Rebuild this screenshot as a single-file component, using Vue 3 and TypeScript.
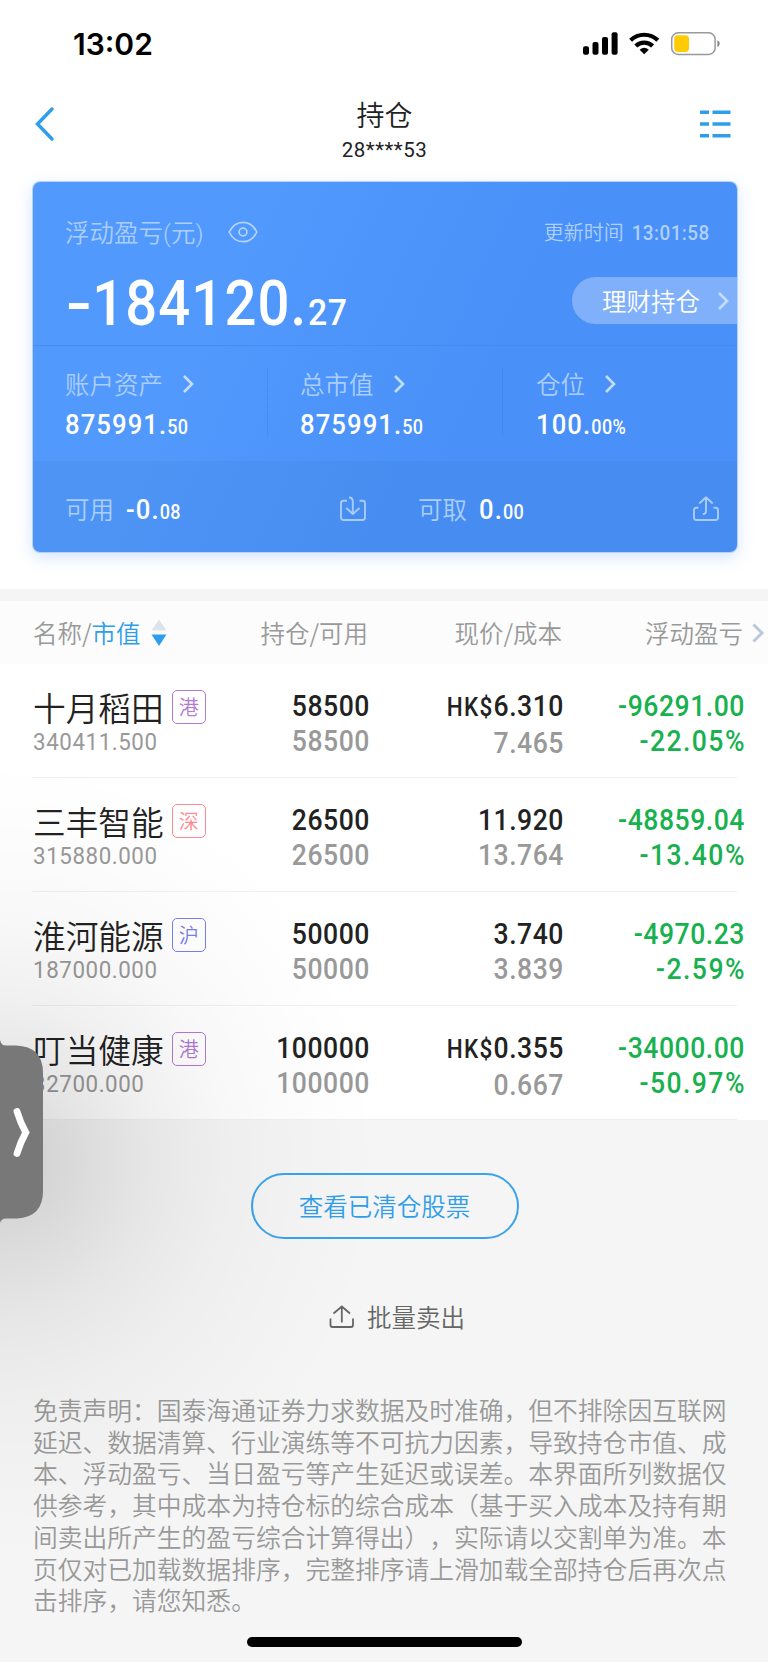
<script setup lang="ts">
interface Summary {
  label: string
  whole: string
  fraction: string
}

interface Holding {
  name: string
  market: string
  tone: 'hk' | 'sz' | 'sh'
  value: string
  shares: string
  available: string
  currency?: string
  price: string
  cost: string
  profit: string
  rate: string
}

const summaries: Summary[] = [
  { label: '账户资产', whole: '875991.', fraction: '50' },
  { label: '总市值', whole: '875991.', fraction: '50' },
  { label: '仓位', whole: '100.', fraction: '00%' },
]

const holdings: Holding[] = [
  { name: '十月稻田', market: '港', tone: 'hk', value: '340411.500', shares: '58500', available: '58500', currency: 'HK$', price: '6.310', cost: '7.465', profit: '-96291.00', rate: '-22.05%' },
  { name: '三丰智能', market: '深', tone: 'sz', value: '315880.000', shares: '26500', available: '26500', price: '11.920', cost: '13.764', profit: '-48859.04', rate: '-13.40%' },
  { name: '淮河能源', market: '沪', tone: 'sh', value: '187000.000', shares: '50000', available: '50000', price: '3.740', cost: '3.839', profit: '-4970.23', rate: '-2.59%' },
  { name: '叮当健康', market: '港', tone: 'hk', value: '32700.000', shares: '100000', available: '100000', currency: 'HK$', price: '0.355', cost: '0.667', profit: '-34000.00', rate: '-50.97%' },
]

const disclaimer: string[] = [
  '免责声明：国泰海通证券力求数据及时准确，但不排除因互联网',
  '延迟、数据清算、行业演练等不可抗力因素，导致持仓市值、成',
  '本、浮动盈亏、当日盈亏等产生延迟或误差。本界面所列数据仅',
  '供参考，其中成本为持仓标的综合成本（基于买入成本及持有期',
  '间卖出所产生的盈亏综合计算得出），实际请以交割单为准。本',
  '页仅对已加载数据排序，完整排序请上滑加载全部持仓后再次点',
  '击排序，请您知悉。',
]
</script>

<template>
  <div class="page">
    <div class="status">
      <span class="clock">13:02</span>
      <svg class="status-icons" width="140" height="26" viewBox="0 0 140 26">
        <rect x="2" y="16.3" width="6" height="8.4" rx="2" />
        <rect x="11.5" y="12" width="6" height="12.7" rx="2" />
        <rect x="21" y="7" width="6" height="17.7" rx="2" />
        <rect x="30.6" y="2.3" width="6" height="22.4" rx="2" />
        <g fill="none" stroke="#000" stroke-width="4.2">
          <path d="M49.6 10.3a19.5 19.5 0 0 1 27.2 0" />
          <path d="M54.8 16a12 12 0 0 1 16.8 0" />
        </g>
        <path d="M63.2 24.3l-4.6-4.6q4.6-4 9.2 0z" />
        <rect x="90.7" y="2.8" width="43.4" height="21.6" rx="6.5" fill="#fff" stroke="#999" stroke-width="1.5" />
        <rect x="93.2" y="5.3" width="14.8" height="16.6" rx="3.6" fill="#ffcb05" />
        <path d="M136.3 10.2q2.5 1 2.5 3.4t-2.5 3.4z" fill="#8b8b8b" />
      </svg>
    </div>

    <header class="nav">
      <svg class="back" width="22" height="36" viewBox="0 0 22 36">
        <path d="M19 3L4.5 18L19 33" fill="none" stroke="#2f9eea" stroke-width="3.4" stroke-linecap="round" />
      </svg>
      <div class="titles">
        <h1>持仓</h1>
        <p>28****53</p>
      </div>
      <svg class="menu" width="32" height="30" viewBox="0 0 32 30">
        <path d="M1 3.2h9M13.5 3.2h18M1 15h9M13.5 15h18M1 26.7h9M13.5 26.7h18" stroke="#2f9eea" stroke-width="3.6" />
      </svg>
    </header>

    <section class="card">
      <div class="card-top">
        <div class="card-head">
          <span class="soft label">浮动盈亏<span class="paren">(</span>元<span class="paren">)</span></span>
          <svg class="eye" width="30" height="22" viewBox="0 0 30 22">
            <g fill="none" stroke="#b4d3fe" stroke-width="1.7">
              <path d="M1.2 11C4.5 4.2 9.5 1.3 15 1.3S25.5 4.2 28.8 11C25.5 17.8 20.5 20.7 15 20.7S4.5 17.8 1.2 11z" />
              <circle cx="15" cy="11" r="3.9" />
            </g>
          </svg>
          <span class="updated">更新时间 <span class="num">13:01:58</span></span>
        </div>
        <div class="card-total">
          <div class="total num"><span class="minus">-</span>184120.<small>27</small></div>
          <div class="pill">
            理财持仓
            <svg width="12" height="20" viewBox="0 0 12 20"><path d="M2 2l8 8-8 8" /></svg>
          </div>
        </div>
      </div>
      <div class="card-mid">
        <div v-for="s in summaries" :key="s.label" class="col">
          <div class="col-label soft">
            {{ s.label }}
            <svg width="12" height="20" viewBox="0 0 12 20"><path d="M2 2l8 8-8 8" /></svg>
          </div>
          <div class="amount num">{{ s.whole }}<small>{{ s.fraction }}</small></div>
        </div>
      </div>
      <div class="card-bottom">
        <span class="soft">可用</span>
        <span class="amount num cash">-0.<small>08</small></span>
        <svg class="deposit" width="28" height="28" viewBox="0 0 28 28">
          <path d="M8 5.8H4.5Q2 5.8 2 8.3V22.5Q2 25 4.5 25H23.5Q26 25 26 22.5V8.3Q26 5.8 23.5 5.8H20.5M10 2.5Q13.8 2.5 13.8 6.5V18.5M7.3 13L13.8 19L20.5 13" />
        </svg>
        <span class="soft withdraw">可取</span>
        <span class="amount num">0.<small>00</small></span>
        <svg class="export" width="28" height="28" viewBox="0 0 28 28">
          <path d="M6.5 12.8H4.5Q2 12.8 2 15.3V22.5Q2 25 4.5 25H23.5Q26 25 26 22.5V15.3Q26 12.8 23.5 12.8H21.5M10.8 19.2Q14 19.2 14 15.5V2.5M7.3 8.5L14 2.3L20.7 8.5" />
        </svg>
      </div>
    </section>

    <section class="table">
      <div class="thead">
        <div class="c1">
          <span>名称/<b>市值</b></span>
          <svg width="16" height="28" viewBox="0 0 16 28">
            <path d="M8 .5L15.5 11.5H.5z" fill="#dbe4ed" />
            <path d="M8 27L15.5 15.5H.5z" fill="#2f9eea" />
          </svg>
        </div>
        <div class="c2">持仓/可用</div>
        <div class="c3">现价/成本</div>
        <div class="c4">浮动盈亏</div>
        <svg class="more" width="14" height="22" viewBox="0 0 14 22"><path d="M2.5 2.5L11 11L2.5 19.5" fill="none" stroke="#b9c8da" stroke-width="3" /></svg>
      </div>
      <div v-for="h in holdings" :key="h.name" class="row">
        <div class="c1">
          <div class="stock"><span>{{ h.name }}</span><i :class="h.tone">{{ h.market }}</i></div>
          <div class="value num">{{ h.value }}</div>
        </div>
        <div class="c2 num">
          <div>{{ h.shares }}</div>
          <div class="dim">{{ h.available }}</div>
        </div>
        <div class="c3 num">
          <div><small v-if="h.currency">{{ h.currency }}</small>{{ h.price }}</div>
          <div class="dim">{{ h.cost }}</div>
        </div>
        <div class="c4 num">
          <div>{{ h.profit }}</div>
          <div class="rate">{{ h.rate }}</div>
        </div>
      </div>
    </section>

    <footer class="foot">
      <button class="cleared" type="button">查看已清仓股票</button>
      <div class="batch">
        <svg width="26" height="24" viewBox="0 0 26 24">
          <path d="M1.5 13.5V20Q1.5 22 3.5 22H22Q24 22 24 20V13.5M12.8 17.5V1.8M4.5 8.5L12.8 1.5L21 8.5" fill="none" stroke="#666" stroke-width="1.8" />
        </svg>
        <span>批量卖出</span>
      </div>
      <p class="disclaimer">
        <span v-for="line in disclaimer" :key="line">{{ line }}</span>
      </p>
    </footer>

    <div class="shade"></div>
    <svg class="drawer" width="44" height="186" viewBox="0 0 44 186">
      <path d="M0 3Q1 8.5 6 8.5H16Q43 9.5 43 36V154Q43 180 17 181.5H6Q1 181.5 0 186z" fill="#787878" />
      <path d="M17 74.5Q20.5 86 25.8 95.5Q20.5 105 17 116.5" fill="none" stroke="#fff" stroke-width="6.8" stroke-linecap="round" />
    </svg>
    <div class="home"></div>
  </div>
</template>

<style>
body {
  margin: 0;
  background: #f5f5f5;
}
</style>

<style scoped>
.page {
  position: relative;
  width: 768px;
  height: 1662px;
  overflow: hidden;
  background: #fff;
  color: #222;
  font-family: "Noto Sans CJK SC", sans-serif;
  font-weight: 350;
}

.num {
  font-family: Roboto, "Liberation Sans", sans-serif;
  font-weight: 500;
}

.status {
  display: flex;
  justify-content: space-between;
  height: 88px;
  padding: 0 47px 0 73px;
  box-sizing: border-box;
}

.clock {
  margin-top: 26px;
  font: 600 30px/36px Inter, sans-serif;
  color: #000;
}

.status-icons {
  margin-top: 30px;
}

.nav {
  display: flex;
  justify-content: space-between;
  height: 94px;
  padding: 0 37px 0 33px;
  box-sizing: border-box;
}

.back {
  margin-top: 18px;
}

.menu {
  margin-top: 21px;
}

.titles {
  margin-left: 15px;
  text-align: center;
}

.titles h1 {
  margin: 9px 0 0;
  font-size: 28px;
  font-weight: 350;
  line-height: 34px;
}

.titles p {
  margin: 7px 0 0;
  font: 400 20.5px/24px Roboto, sans-serif;
  letter-spacing: 0.5px;
}

.card {
  width: 704px;
  height: 370px;
  margin-left: 33px;
  border-radius: 7px;
  overflow: hidden;
  background: linear-gradient(115deg, #5199fd 0%, #5199fd 28%, #4990f8 62%, #4990f8 100%);
  box-shadow: 0 0 0 1px #b5d2fb, 0 5px 16px rgba(74, 144, 248, 0.25);
  color: #fff;
}

.soft {
  font-size: 24.5px;
  color: #acceff;
}

.card-top {
  height: 164px;
  box-sizing: border-box;
  padding: 30px 0 0 32px;
  border-bottom: 1px solid #478bee;
}

.card-head {
  display: flex;
  align-items: center;
  height: 40px;
  line-height: 40px;
}

.label {
  width: 139px;
  white-space: nowrap;
}

.paren {
  display: inline-block;
  width: 8px;
  text-align: center;
  font-family: Roboto, sans-serif;
  font-weight: 300;
  line-height: 30px;
}

.eye {
  margin-left: 24px;
}

.updated {
  margin: 1px 27px 0 auto;
  font-size: 20px;
  color: #b0d0fd;
}

.updated .num {
  display: inline-block;
  margin-left: -5px;
  font-size: 21px;
  letter-spacing: 0.5px;
  transform: scaleX(0.9);
  transform-origin: right;
}

.card-total {
  display: flex;
  justify-content: space-between;
  margin-top: 20px;
}

.total {
  margin-left: 2px;
  font-size: 62.5px;
  line-height: 64px;
  letter-spacing: 1.2px;
  transform: scaleX(0.9);
  transform-origin: left;
}

.total small {
  margin-left: 1px;
  font-size: 37.5px;
  letter-spacing: 0.4px;
}

.minus {
  display: inline-block;
  width: 28px;
  text-align: center;
  transform: scaleX(1.35);
}

.pill {
  display: flex;
  align-items: center;
  justify-content: space-between;
  width: 165px;
  height: 47px;
  margin-top: 5px;
  padding: 0 8px 0 30px;
  box-sizing: border-box;
  border-radius: 24px 0 0 24px;
  background: #80b0fa;
  font-size: 24.5px;
  line-height: 47px;
}

.pill svg,
.col-label svg {
  fill: none;
  stroke: #c4dcff;
  stroke-width: 2.6;
}

.card-mid {
  display: grid;
  grid-template-columns: 235px 235px 1fr;
  height: 115px;
  box-sizing: border-box;
  padding: 23px 0;
}

.col {
  padding-left: 32px;
  height: 67px;
  border-right: 1px dotted #3f83e3;
}

.col:last-child {
  padding-left: 33px;
  border-right: 0;
}

.col-label {
  display: flex;
  align-items: center;
  gap: 19px;
  height: 30px;
  line-height: 30px;
}

.amount {
  font-size: 28.5px;
  line-height: 36px;
  letter-spacing: 1.2px;
  transform: scaleX(0.9);
  transform-origin: left;
}

.col .amount {
  margin-top: 8px;
}

.amount small {
  font-size: 20px;
  letter-spacing: 0.5px;
}

.card-bottom {
  display: flex;
  align-items: center;
  height: 91px;
  box-sizing: border-box;
  padding: 4px 17px 0 32px;
  background: rgba(60, 120, 200, 0.14);
}

.card-bottom svg {
  fill: none;
  stroke: #a9cbfb;
  stroke-width: 1.9;
  stroke-linejoin: round;
}

.card-bottom .amount {
  margin-left: 12px;
  padding-top: 4px;
}

.card-bottom .cash {
  width: 213px;
}

.withdraw {
  margin-left: 51px;
}

.export {
  margin-left: auto;
}

.table {
  margin-top: 37px;
  border-top: 12px solid #f5f5f5;
}

.thead {
  display: flex;
  align-items: center;
  height: 63px;
  padding-left: 33px;
  background: #fcfcfc;
  color: #999;
  font-size: 24.5px;
  line-height: 40px;
}

.thead b {
  font-weight: 350;
  color: #2f9eea;
}

.thead .c1 {
  display: flex;
  align-items: center;
  gap: 10px;
}

.more {
  margin-left: 8px;
}

.c1 {
  width: 191px;
  flex: none;
}

.c2 {
  width: 144px;
  flex: none;
  text-align: right;
}

.c3 {
  width: 194px;
  flex: none;
  text-align: right;
}

.c4 {
  width: 181px;
  flex: none;
  text-align: right;
}

.row {
  display: flex;
  height: 114px;
  box-sizing: border-box;
  padding-left: 33px;
  background: linear-gradient(#f0f0f0, #f0f0f0) 32px 100% / 705px 1px no-repeat;
}

.row .num {
  font-size: 29.5px;
  line-height: 34.5px;
  letter-spacing: 0.6px;
  transform: scaleX(0.9);
  transform-origin: right;
}

.row .c2,
.row .c3,
.row .c4 {
  padding: 25px 0 0;
  margin-right: -2px;
  margin-left: 2px;
}

.row .num small {
  font-size: 25px;
  letter-spacing: 1.4px;
}

.row .dim {
  color: #999;
}

.row .c4 {
  color: #18b14f;
}

.row .rate {
  letter-spacing: 1.6px;
  margin-right: -1px;
}

.stock {
  display: flex;
  align-items: center;
  margin-top: 24px;
  height: 38px;
  font-size: 32.7px;
  line-height: 38px;
  white-space: nowrap;
}

.stock i {
  width: 32px;
  height: 32px;
  margin-left: 8px;
  border: 1.5px solid;
  border-radius: 5px;
  font-size: 20px;
  font-style: normal;
  line-height: 32px;
  text-align: center;
}

.hk {
  color: #b27ad6;
}

.sz {
  color: #ff8a92;
}

.sh {
  color: #7a7ff0;
}

.row .value {
  margin-top: 1px;
  font-size: 24.8px;
  font-weight: 400;
  line-height: 30px;
  letter-spacing: 0.65px;
  transform-origin: left;
  color: #999;
}

.foot {
  display: flex;
  flex-direction: column;
  align-items: center;
  height: 550px;
  background: #f5f5f5;
}

.cleared {
  width: 268px;
  height: 66px;
  margin-top: 53px;
  margin-left: 1px;
  padding: 0;
  border: 2px solid #3ba3ec;
  border-radius: 33px;
  background: transparent;
  color: #2f9eea;
  font: 350 24.5px/60px "Noto Sans CJK SC", sans-serif;
}

.batch {
  display: flex;
  align-items: center;
  gap: 12px;
  height: 40px;
  margin-top: 58px;
  margin-left: 26px;
  color: #666;
  font-size: 24.5px;
  line-height: 40px;
}

.disclaimer {
  align-self: flex-start;
  margin: 57px 0 0 33px;
  color: #999;
  font-size: 24.78px;
  line-height: 31.7px;
  text-spacing-trim: space-all;
}

.disclaimer span {
  display: block;
  white-space: nowrap;
}

.shade {
  position: absolute;
  left: 0;
  top: 760px;
  width: 400px;
  height: 800px;
  background: radial-gradient(380px 400px at 0 400px, rgba(0, 0, 0, 0.165), rgba(0, 0, 0, 0.11) 20%, rgba(0, 0, 0, 0.06) 40%, rgba(0, 0, 0, 0.028) 60%, rgba(0, 0, 0, 0.01) 80%, transparent);
}

.drawer {
  position: absolute;
  left: 0;
  top: 1037px;
}

.home {
  position: absolute;
  left: 247px;
  top: 1637px;
  width: 275px;
  height: 10px;
  border-radius: 5px;
  background: #000;
}
</style>
